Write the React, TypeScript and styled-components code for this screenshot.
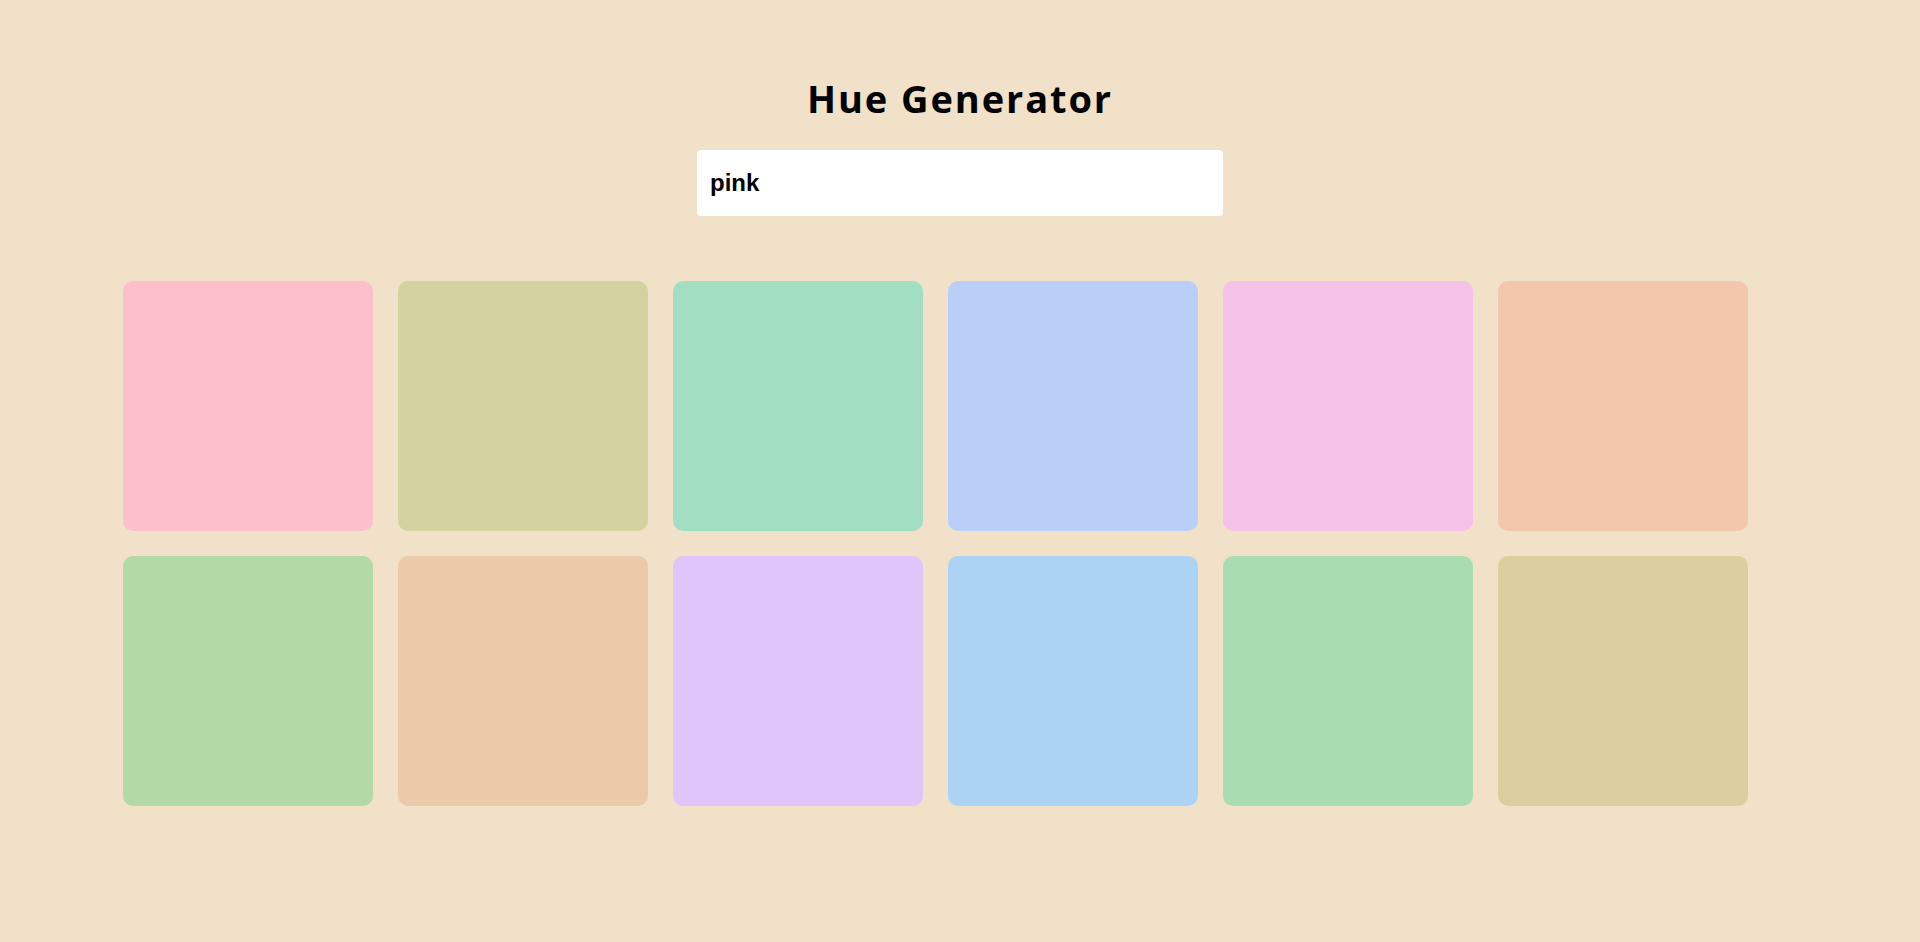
import React from "react";
import styled, { createGlobalStyle } from "styled-components";

const Global = createGlobalStyle`
  html, body { margin: 0; padding: 0; background: #f1e1c8; }
  body { font-family: "Liberation Sans", Arial, sans-serif; }
`;

const Page = styled.main`
  min-height: 942px;
  background: #f1e1c8;
  display: flex;
  flex-direction: column;
  align-items: center;
`;

const Title = styled.h1`
  margin: 74px 0 0;
  height: 48px;
  line-height: 48px;
  font-family: "Open Sans", "Noto Sans", sans-serif;
  font-weight: 700;
  font-size: 38px;
  letter-spacing: 1.9px;
  color: #000;
`;

const Search = styled.input`
  margin-top: 28px;
  width: 526px;
  height: 66px;
  box-sizing: border-box;
  border: none;
  border-radius: 4px;
  background: #fff;
  padding: 0 13px;
  font-family: "Liberation Sans", Arial, sans-serif;
  font-weight: 700;
  font-size: 24px;
  color: #000;
  outline: none;
`;

const Grid = styled.section`
  align-self: stretch;
  margin-top: 65px;
  padding-left: 123px;
  display: grid;
  grid-template-columns: repeat(6, 250px);
  gap: 25px;
`;

const Swatch = styled.div<{ $c: string }>`
  width: 250px;
  height: 250px;
  border-radius: 10px;
  background: ${(p) => p.$c};
`;

const colors = [
  "#fdbfcb",
  "#d4d29f",
  "#a2dfc2",
  "#b9cff8",
  "#f5c1e9",
  "#f2c7ac",
  "#b3d9a6",
  "#eacaa9",
  "#e0c5fb",
  "#acd3f3",
  "#aadcb1",
  "#dbcf9f",
];

export default function App() {
  return (
    <>
      <Global />
      <Page>
        <Title>Hue Generator</Title>
        <Search defaultValue="pink" />
        <Grid>
          {colors.map((c, i) => (
            <Swatch key={i} $c={c} />
          ))}
        </Grid>
      </Page>
    </>
  );
}
